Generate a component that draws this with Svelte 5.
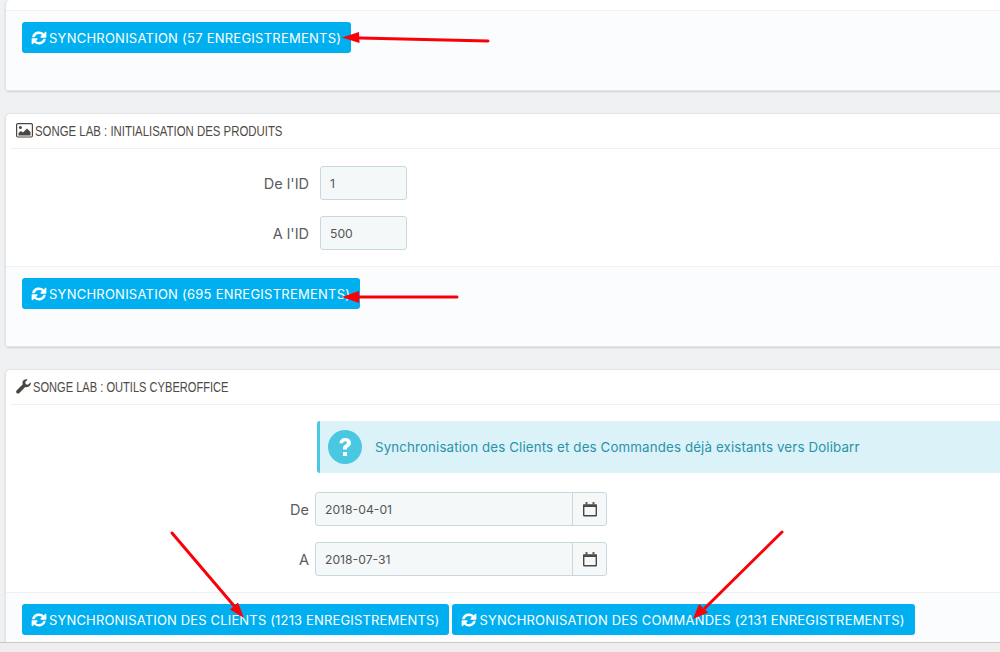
<script>
  const sync = 'M17.6 10.5c-.4 3.900-3.700 6.700-7.600 6.700-2 0-3.900-.8-5.300-2.100L3.200 16.600c-.2.200-.4.300-.6.300-.5 0-.8-.4-.8-.8v-5c0-.5.300-.8.800-.8h5c.5 0 .8.300.8.800 0 .2-.1.400-.2.600L6.700 13.200c.9.900 2.100 1.300 3.300 1.300 1.800 0 3.500-1 4.300-2.500.2-.4.400-.9.500-1.300h2.600c.2 0 .2.100.2.300zM18.200 3.900v5c0 .5-.3.800-.8.800h-5c-.5 0-.8-.3-.8-.8 0-.2.100-.4.200-.6l1.500-1.500C12.400 5.900 11.200 5.500 10 5.500c-1.800 0-3.500 1-4.300 2.500-.2.400-.4.900-.5 1.300H2.600c-.2 0-.2-.1-.2-.3C2.800 5 6.100 2.800 10 2.800c2 0 3.900.8 5.300 2.100l1.500-1.500c.2-.2.400-.3.600-.3.500 0 .8.400.8.800z'
</script>

{#snippet syncBtn(label, cls = '')}
  <button class="btn {cls}">
    <svg viewBox="0 0 20 20" class="ico"><path d={sync} fill="#fff" /></svg>
    {label}
  </button>
{/snippet}

{#snippet dateRow(label, value)}
  <div class="row date-row">
    <span class="lbl">{label}</span>
    <div class="date-group">
      <span class="date-value">{value}</span>
      <span class="date-addon">
        <svg viewBox="0 0 20 20" width="20" height="20">
          <rect x="3.700" y="6.200" width="12.600" height="10.600" rx=".6" fill="none" stroke="#4a4742" stroke-width="1.400" />
          <path d="M3 5.500h14v2.500H3z" fill="#4a4742" />
          <path d="M5.500 3h2v3.500h-2zM12.500 3h2v3.500h-2z" fill="#6e5f4c" />
        </svg>
      </span>
    </div>
  </div>
{/snippet}

<div class="page">
  <section class="panel first">
    <div class="footer tall">
      {@render syncBtn('SYNCHRONISATION (57 ENREGISTREMENTS)')}
    </div>
  </section>

  <section class="panel">
    <header>
      <svg viewBox="0 0 17 15" width="17" height="15" class="head-ico">
        <rect x=".6" y=".6" width="15.800" height="13.400" rx="1.200" fill="none" stroke="#4a4742" stroke-width="1.200" />
        <circle cx="4.400" cy="4.400" r="1.500" fill="#4a4742" />
        <path d="M2.500 12.500V10l2.500-2 2 1.500 4-4 3.500 3.500v3.500z" fill="#4a4742" />
      </svg>
      <span class="title">SONGE LAB : INITIALISATION DES PRODUITS</span>
    </header>
    <div class="body id-form">
      <div class="row">
        <span class="lbl">De l'ID</span>
        <span class="small-input">1</span>
      </div>
      <div class="row">
        <span class="lbl">A l'ID</span>
        <span class="small-input">500</span>
      </div>
    </div>
    <div class="footer tall">
      {@render syncBtn('SYNCHRONISATION (695 ENREGISTREMENTS)')}
    </div>
  </section>

  <section class="panel">
    <header>
      <svg viewBox="0 0 16 16" width="15" height="15" class="head-ico">
        <path d="M15.700 3.800c0-.2-.2-.3-.4-.2l-2.600 2.400-2.300-.5-.6-2.200L12.300.8c.1-.2 0-.4-.2-.4C9.800-.2 7.500 1 7 3.200c-.2.900-.1 1.700.2 2.500L.8 12c-.9.900-.9 2.100-.1 2.900.8.800 2.100.8 2.900-.1l6.300-6.400c.8.300 1.700.4 2.500.2 2.300-.6 3.800-2.600 3.300-4.800z" fill="#4a4742" />
      </svg>
      <span class="title short">SONGE LAB : OUTILS CYBEROFFICE</span>
    </header>
    <div class="body tools">
      <div class="alert">
        <svg viewBox="0 0 34 34" width="34" height="34" class="help">
          <circle cx="17" cy="17" r="17" fill="#4ac7e1" />
          <path d="M11.500 13.200c0-3.200 2.500-5.200 5.700-5.200 3.100 0 5.800 2 5.800 4.900 0 2.300-1.400 3.300-2.700 4.100-1 .6-1.300 1-1.300 1.800v.8h-4v-1.300c0-1.900 1-2.900 2.200-3.600 1-.6 1.700-1 1.700-1.900 0-.9-.8-1.500-1.800-1.500-1.100 0-1.800.7-2.100 1.900zM15 22h4v4h-4z" fill="#fff" />
        </svg>
        Synchronisation des Clients et des Commandes déjà existants vers Dolibarr
      </div>
      {@render dateRow('De', '2018-04-01')}
      {@render dateRow('A', '2018-07-31')}
    </div>
    <div class="footer btns">
      {@render syncBtn('SYNCHRONISATION DES CLIENTS (1213 ENREGISTREMENTS)', 'tight')}
      {@render syncBtn('SYNCHRONISATION DES COMMANDES (2131 ENREGISTREMENTS)', 'mid')}
    </div>
  </section>

  <div class="bottom-bar"></div>

  <!-- annotations drawn on top of the screenshot -->
  <svg class="arrows" viewBox="0 0 1000 652" width="1000" height="652">
    <g stroke="#fb0007" stroke-width="3" fill="#fb0007" stroke-linecap="round">
      <path d="M488 41 360 38" fill="none" />
      <path d="M342 37.500l17-5.500 .5 11z" stroke="none" />
      <path d="M457 297 358 297" fill="none" />
      <path d="M342 297l17-6v12z" stroke="none" />
      <path d="M172 533 235 607" fill="none" />
      <path d="M244 618l-14-8.500 8-7z" stroke="none" />
      <path d="M782 532 705 608" fill="none" />
      <path d="M693 619l6-15 9 8.500z" stroke="none" />
    </g>
  </svg>
</div>

<style>
  :global(body) {
    margin: 0;
    background: #eff1f2;
  }
  .page {
    position: relative;
    width: 1000px;
    height: 652px;
    overflow: hidden;
    padding: 0 0 0 5px;
    box-sizing: border-box;
    background: #eff1f2;
    font-family: Inter, "Open Sans", sans-serif;
    color: #555;
  }
  .panel {
    width: 1010px;
    background: #fff;
    border: 1px solid #e3e5e6;
    border-radius: 5px;
    box-shadow: 0 1px 2px rgba(0, 0, 0, 0.14);
    margin-bottom: 22px;
    box-sizing: border-box;
  }
  .first {
    padding-top: 10px;
    border-top: 0;
  }
  header {
    display: flex;
    align-items: center;
    gap: 2px;
    height: 35px;
    margin-left: 5px;
    padding: 0 0 1px 5px;
    border-bottom: 1px solid #eef0f1;
    box-sizing: border-box;
    color: #4f4a45;
    white-space: nowrap;
  }
  /* the original heading face is condensed and no narrow family is installed */
  .title {
    display: inline-block;
    font-family: "Liberation Sans", sans-serif;
    font-size: 15px;
    transform: scaleX(0.76);
    transform-origin: left center;
  }
  .title.short {
    transform: scaleX(0.74);
  }
  .head-ico {
    flex: none;
  }
  .body {
    display: flex;
    flex-direction: column;
  }
  .id-form {
    padding: 17px 0 16px;
    gap: 16px;
  }
  .row {
    display: flex;
    align-items: center;
    height: 34px;
  }
  .lbl {
    width: 314px;
    padding-right: 11px;
    box-sizing: border-box;
    text-align: right;
    font-size: 14.500px;
    color: #5c5c5c;
  }
  .small-input {
    width: 87px;
    height: 34px;
    padding-left: 9px;
    box-sizing: border-box;
    display: flex;
    align-items: center;
    background: #f4f8f9;
    border: 1px solid #c9d8dd;
    border-radius: 3px;
    font-size: 12.200px;
    color: #555;
  }
  .tools {
    padding: 16px 0 16px;
  }
  .alert {
    display: flex;
    align-items: center;
    margin-left: 311px;
    height: 52px;
    padding-left: 8px;
    gap: 13px;
    background: #dbf2f8;
    border-left: 3px solid #4ac7e1;
    border-radius: 3px 0 0 3px;
    box-sizing: border-box;
    font-size: 13.300px;
    letter-spacing: 0.14px;
    color: #2a93a8;
    white-space: nowrap;
  }
  .help {
    flex: none;
  }
  .date-row {
    margin-top: 16px;
  }
  .alert + .date-row {
    margin-top: 19px;
  }
  .date-row .lbl {
    width: 309px;
    padding-right: 6px;
  }
  .date-group {
    display: flex;
    width: 292px;
    height: 34px;
    box-sizing: border-box;
    background: #f4f8f9;
    border: 1px solid #c9d8dd;
    border-radius: 3px;
    font-size: 12.200px;
    color: #555;
  }
  .date-value {
    flex: 1;
    display: flex;
    align-items: center;
    padding-left: 9px;
  }
  .date-addon {
    width: 33px;
    display: flex;
    align-items: center;
    justify-content: center;
    border-left: 1px solid #c9d8dd;
  }
  .footer {
    background: #fbfcfe;
    border-top: 1px solid #eef0f1;
    padding: 11px 16px;
    box-sizing: border-box;
    display: flex;
    align-items: flex-start;
    gap: 3px;
  }
  .tall {
    height: 80px;
  }
  .btns {
    height: 60px;
  }
  .btn {
    display: flex;
    align-items: center;
    gap: 1px;
    height: 31px;
    padding: 0 10px 0 8px;
    border: 0;
    border-radius: 3px;
    background: #00aff0;
    color: #fff;
    font-family: inherit;
    font-size: 13px;
    letter-spacing: 0.24px;
    white-space: nowrap;
  }
  .btn.tight {
    letter-spacing: 0.16px;
  }
  .btn.mid {
    letter-spacing: 0.2px;
  }
  .ico {
    width: 18px;
    height: 18px;
    flex: none;
  }
  .bottom-bar {
    position: absolute;
    left: 0;
    right: 0;
    bottom: 0;
    height: 10px;
    background: #eee;
    border-top: 1px solid #c8c8c8;
    box-sizing: border-box;
  }
  .arrows {
    position: absolute;
    left: 0;
    top: 0;
    pointer-events: none;
  }
</style>
